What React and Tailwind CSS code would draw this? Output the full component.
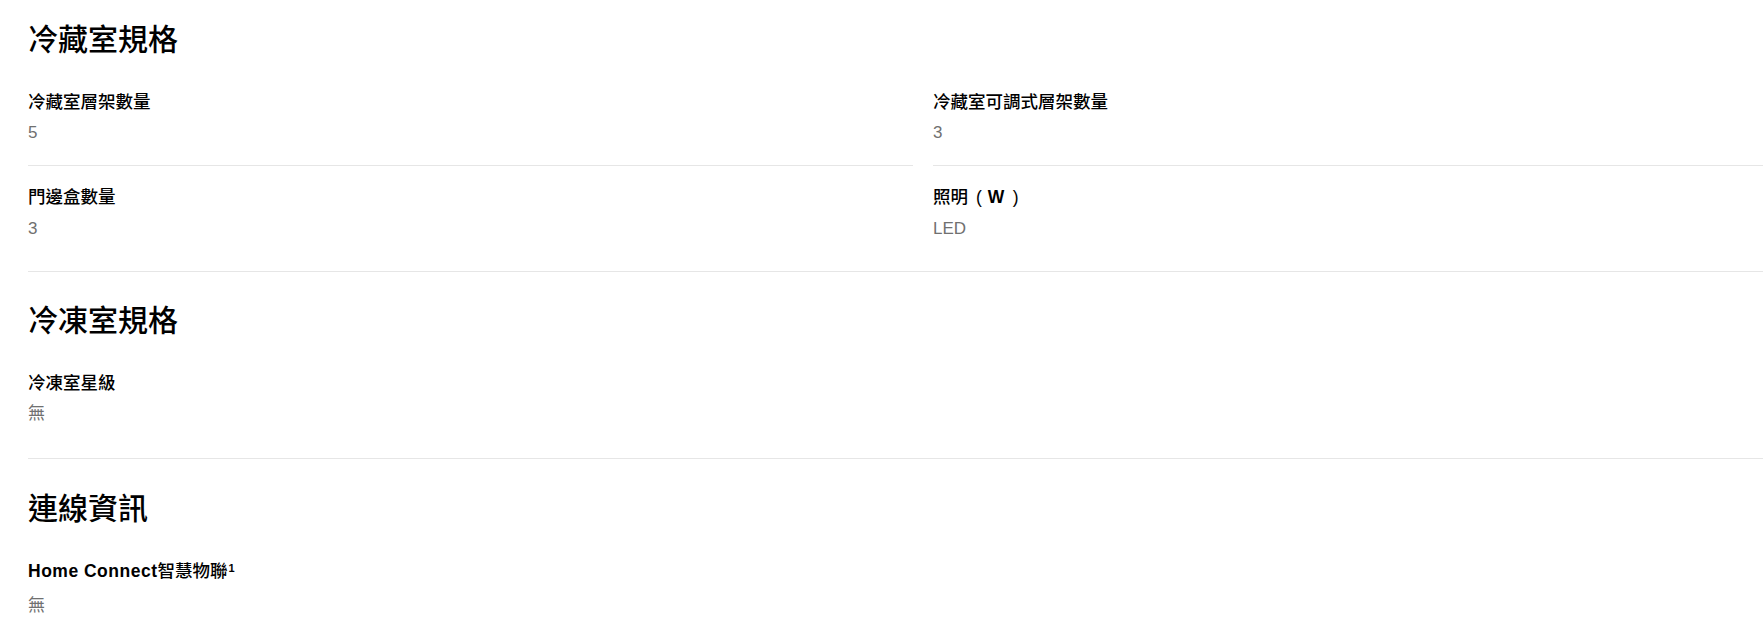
import React from "react";

const FONT = { fontFamily: '"Liberation Sans", "Noto Sans CJK TC", sans-serif' };

function Item({ label, value, border = false, first = true, valueClass = "mt-[7px]" }) {
  return (
    <div className={(first ? "pt-[0px] " : "pt-[19px] ") + (border ? "border-b border-[#e6e6e6] pb-[20px]" : first ? "pb-[32px]" : "pb-[30px]")}>
      <div className="text-[17.5px] leading-[24px] text-black font-medium">{label}</div>
      <div className={"text-[17px] leading-[24px] text-[#707070] " + (first ? valueClass : "mt-[8px]")}>{value}</div>
    </div>
  );
}

function Heading({ children }) {
  return <h2 className="text-[30px] leading-[36px] font-medium text-black mb-[32px]">{children}</h2>;
}

export default function App() {
  return (
    <div className="w-full min-h-[636px] overflow-hidden bg-white" style={FONT}>
      <div className="w-[1818px] pl-[28px] pt-[22px]">
        <section className="border-b border-[#e6e6e6]">
          <Heading>冷藏室規格</Heading>
          <div className="grid grid-cols-[885px_885px] gap-x-5">
            <Item label="冷藏室層架數量" value="5" border />
            <Item label="冷藏室可調式層架數量" value="3" border />
            <Item label="門邊盒數量" value="3" first={false} />
            <Item
              label={
                <>
                  照明<span className="ml-[8px] mr-[6px]">(</span>
                  <span className="font-bold tracking-[0.5px]">W</span>
                  <span className="ml-[8px]">)</span>
                </>
              }
              value="LED"
              first={false}
            />
          </div>
        </section>
        <section className="border-b border-[#e6e6e6] pt-[31px]">
          <Heading>冷凍室規格</Heading>
          <div className="grid grid-cols-[885px_885px] gap-x-5">
            <Item label="冷凍室星級" value="無" />
          </div>
        </section>
        <section className="pt-[32px]">
          <Heading>連線資訊</Heading>
          <div className="grid grid-cols-[885px_885px] gap-x-5">
            <Item
              label={
                <>
                  <span className="font-bold tracking-[0.5px]">Home Connect</span>智慧物聯
                  <sup className="font-bold text-[11px] ml-[1px]">1</sup>
                </>
              }
              value="無"
              valueClass="mt-[11px]"
            />
          </div>
        </section>
      </div>
    </div>
  );
}
